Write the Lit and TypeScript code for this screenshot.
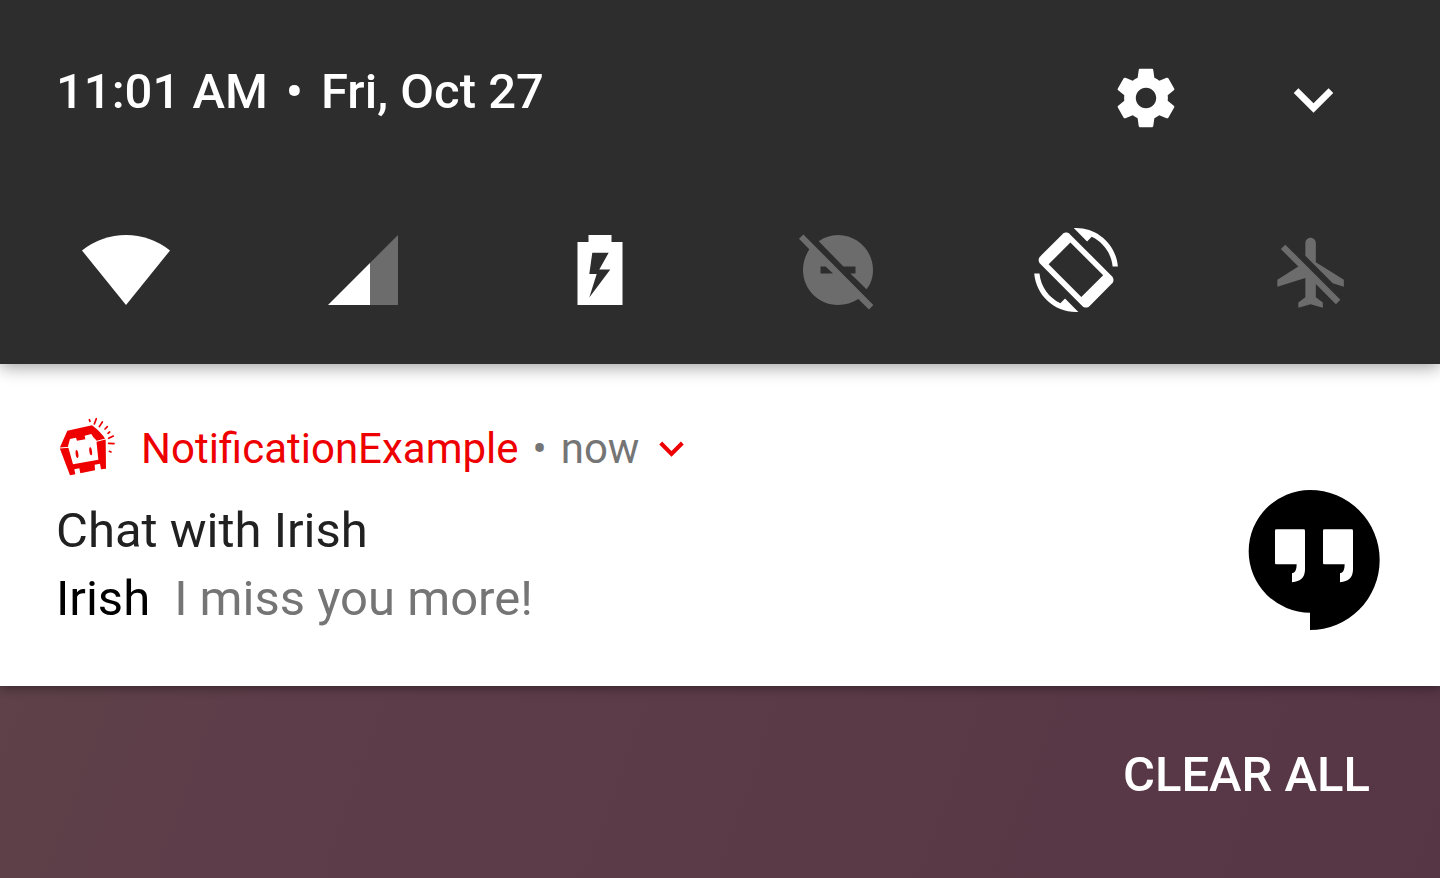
import { LitElement, html, css, svg } from "lit";
import { customElement } from "lit/decorators.js";

const EXPAND = svg`<path d="M16.59 8.59L12 13.17 7.41 8.59 6 10l6 6 6-6z"/>`;

@customElement("quick-settings")
export class QuickSettings extends LitElement {
  static styles = css`
    :host {
      display: block;
      position: relative;
      z-index: 1;
      padding: 60px 86px 52px 84px;
      background: #2d2d2d;
      color: #fff;
      box-shadow: 0 3px 16px rgba(0, 0, 0, 0.38);
    }
    svg {
      display: block;
      flex: none;
      fill: currentColor;
      overflow: visible;
    }
    button {
      display: flex;
      align-items: center;
      justify-content: center;
      padding: 0;
      border: 0;
      background: none;
      color: inherit;
      cursor: pointer;
    }
    .bar {
      display: flex;
      align-items: flex-start;
      margin-left: -28px;
      height: 80px;
    }
    .clock {
      flex: 1;
      display: flex;
      gap: 18px;
      margin: 0;
      font-size: 49px;
      font-weight: 500;
      line-height: 64px;
      white-space: nowrap;
    }
    .settings {
      width: 76px;
      height: 76px;
      margin-right: 90px;
    }
    .expand {
      justify-content: flex-start;
      width: 80px;
      height: 78px;
    }
    .tiles {
      display: flex;
      justify-content: space-between;
      margin-top: 88px;
    }
    .off {
      color: #6c6c6c;
    }
  `;

  render() {
    return html`
      <div class="bar">
        <p class="clock"><span>11:01 AM</span><span>•</span><span>Fri, Oct 27</span></p>
        <button class="settings" aria-label="Settings">
          <svg width="70" height="70" viewBox="0 0 24 24">
            <path d="M19.43 12.98c.04-.32.07-.64.07-.98s-.03-.66-.07-.98l2.11-1.65c.19-.15.24-.42.12-.64l-2-3.46c-.12-.22-.39-.3-.61-.22l-2.49 1c-.52-.4-1.08-.73-1.69-.98l-.38-2.65C14.46 2.18 14.25 2 14 2h-4c-.25 0-.46.18-.49.42l-.38 2.65c-.61.25-1.17.59-1.69.98l-2.49-1c-.23-.09-.49 0-.61.22l-2 3.46c-.13.22-.07.49.12.64l2.11 1.65c-.04.32-.07.65-.07.98s.03.66.07.98l-2.11 1.65c-.19.15-.24.42-.12.64l2 3.46c.12.22.39.3.61.22l2.49-1c.52.4 1.08.73 1.69.98l.38 2.65c.03.24.24.42.49.42h4c.25 0 .46-.18.49-.42l.38-2.65c.61-.25 1.17-.59 1.69-.98l2.49 1c.23.09.49 0 .61-.22l2-3.46c.12-.22.07-.49-.12-.64l-2.11-1.65zM12 15.5c-1.93 0-3.5-1.57-3.5-3.5s1.57-3.5 3.5-3.5 3.5 1.57 3.5 3.5-1.57 3.5-3.5 3.5z"/>
          </svg>
        </button>
        <button class="expand" aria-label="Expand quick settings">
          <svg width="79" height="79" viewBox="0 0 24 24">${EXPAND}</svg>
        </button>
      </div>
      <div class="tiles">
        <button aria-label="Wi-Fi">
          <svg width="84" height="84" viewBox="0 0 84 84">
            <path d="M42 77L-2 22.500A70.500 70.500 0 0 1 86 22.500Z"/>
          </svg>
        </button>
        <button aria-label="Mobile signal">
          <svg width="84" height="84" viewBox="0 0 84 84">
            <path fill="#6c6c6c" d="M49 35L77 7V77H49z"/>
            <path d="M7 77L49 35V77z"/>
          </svg>
        </button>
        <button aria-label="Battery charging">
          <svg width="84" height="84" viewBox="0 0 84 84">
            <path fill-rule="evenodd" d="M19.500 14H30.500V7H53.500V14H64.500V77H19.500zM34.300 24.700L31.300 46H38.700L31.300 69.500L52.300 41.500H41.300L50.700 24.700z"/>
          </svg>
        </button>
        <button class="off" aria-label="Do not disturb">
          <svg width="84" height="84" viewBox="0 0 24 24">
            <path d="M17 11v2h-1.460l4.600 4.500C21.340 16.070 22 14.110 22 12c0-5.520-4.480-10-10-10-2.110 0-3.900.660-5.500 1.780L13.540 11H17zM2.100 1.850L.850 3.100l2.930 2.950C2.660 7.930 2 9.890 2 12c0 5.520 4.480 10 10 10 2.110 0 4.070-.600 5.800-1.700L20.850 23.250l1.250-1.270L2.100 1.850zM7 13v-2h1.460l2.100 2H7z"/>
          </svg>
        </button>
        <button aria-label="Auto-rotate">
          <svg width="84" height="84" viewBox="-0.3 0 24 24">
            <path fill-rule="evenodd" d="M16.480 2.520c3.270 1.550 5.610 4.720 5.970 8.480h1.500C23.440 4.840 18.290 0 12 0l-.660.030 3.810 3.810 1.330-1.320zM10.230 1.750c-.590-.590-1.540-.590-2.120 0L1.750 8.110c-.590.590-.590 1.540 0 2.120l12.020 12.020c.590.590 1.540.590 2.120 0l6.360-6.360c.590-.590.590-1.540 0-2.120L10.230 1.750zM10.380 4.160L19.760 13.480 13.500 19.740 4.160 10.380zM7.520 21.480C4.250 19.940 1.910 16.760 1.550 13H.050C.560 19.160 5.710 24 12 24l.660-.030-3.810-3.810-1.330 1.320z"/>
          </svg>
        </button>
        <button class="off" aria-label="Airplane mode">
          <svg width="84" height="84" viewBox="-0.1 -0.75 24 24">
            <path d="M13 9V3.500c0-.830-.670-1.500-1.500-1.500S10 2.670 10 3.500v3.680l7.830 7.830L21 16v-2l-8-5zM3 5.270l4.990 4.990L2 14v2l8-2.500V19l-2 1.500V22l3.500-1 3.500 1v-1.500L13 19v-3.730L18.730 21 20 19.730 4.270 4 3 5.270z"/>
          </svg>
        </button>
      </div>
    `;
  }
}

@customElement("chat-notification")
export class ChatNotification extends LitElement {
  static styles = css`
    :host {
      display: block;
      position: relative;
      padding: 53px 60px 53px 56px;
      background: #fff;
      box-shadow: 0 2px 10px rgba(0, 0, 0, 0.4);
    }
    svg {
      display: block;
      flex: none;
    }
    .source {
      display: flex;
      align-items: flex-start;
      gap: 14px;
      height: 64px;
      font-size: 42px;
      line-height: 64px;
      color: #757575;
      white-space: nowrap;
    }
    .name {
      margin-left: 11px;
      color: #ee0000;
    }
    .expand {
      display: flex;
      align-items: center;
      height: 62px;
      margin-left: -6px;
      padding: 0;
      border: 0;
      background: none;
      fill: #ee0000;
      cursor: pointer;
    }
    .body {
      display: flex;
      justify-content: space-between;
      align-items: flex-start;
      margin-top: 9px;
    }
    .text {
      padding-top: 7px;
      font-size: 49px;
      line-height: 68px;
    }
    .title {
      margin: 0;
      font-size: inherit;
      font-weight: 400;
      color: #212121;
    }
    .message {
      display: flex;
      gap: 24px;
      margin: 0;
      color: #757575;
    }
    .sender {
      color: #000;
    }
  `;

  render() {
    return html`
      <div class="source">
        <svg width="60" height="60" viewBox="48 50 180 180" fill="#ee0000" stroke-linecap="round" aria-hidden="true">
          <path fill-rule="evenodd" d="M82 91L156 75Q184 96 197 118L198 205L183 207L180 190L164 193L165 210L121 219L118 204L103 207L106 222L90 225L59 143zM90 116L108 112L111 121L136 117L134 106L154 101L160 111L169 120L175 178L99 192L84 138z"/>
          <path d="M59 143L86 141M169 123L197 116" stroke="#fff" stroke-width="3"/>
          <ellipse cx="111" cy="161" rx="4" ry="12" transform="rotate(-8 111 161)"/>
          <ellipse cx="152" cy="153" rx="4" ry="12" transform="rotate(-8 152 153)"/>
          <path d="M148 58L150 63M169 55L163 71M187 65L178 79M202 79L195 86M209 95L204 99M220 107L206 114M222 130L206 129M213 155L208 153" fill="none" stroke="#ee0000" stroke-width="5"/>
        </svg>
        <span class="name">NotificationExample</span>
        <span>•</span>
        <span>now</span>
        <button class="expand" aria-label="Expand notification">
          <svg width="49" height="49" viewBox="0 0 24 24">${EXPAND}</svg>
        </button>
      </div>
      <div class="body">
        <div class="text">
          <h2 class="title">Chat with Irish</h2>
          <p class="message"><span class="sender">Irish</span><span>I miss you more!</span></p>
        </div>
        <svg width="132" height="140" viewBox="54 29 396 420" role="img" aria-label="Chat">
          <path d="M240 397A184 184 0 0 1 240 29A209 210 0 0 1 240 449z"/>
          <g fill="#fff">
            <path id="quote" d="M139 147H221Q225 147 225 151V267Q225 303 186 306V279Q200 277 200 252H139Q135 252 135 248V151Q135 147 139 147z"/>
            <use href="#quote" x="144"/>
          </g>
        </svg>
      </div>
    `;
  }
}

@customElement("app-root")
export class AppRoot extends LitElement {
  static styles = css`
    :host {
      display: flex;
      flex-direction: column;
      min-height: 100vh;
      font-family: Roboto, "Liberation Sans", sans-serif;
      background: #5a3946;
    }
    .footer {
      flex: 1;
      display: flex;
      justify-content: flex-end;
      align-items: flex-start;
      padding: 58px 70px 70px;
      background: linear-gradient(110deg, #5e4149 0%, #5d3d49 18%, #5a3a47 60%, #563545 100%);
    }
    .clear {
      padding: 0;
      border: 0;
      background: none;
      font: 500 49px/62px Roboto, "Liberation Sans", sans-serif;
      font-kerning: none;
      color: #fff;
      cursor: pointer;
    }
  `;

  render() {
    return html`
      <quick-settings></quick-settings>
      <chat-notification></chat-notification>
      <div class="footer"><button class="clear">CLEAR ALL</button></div>
    `;
  }
}
